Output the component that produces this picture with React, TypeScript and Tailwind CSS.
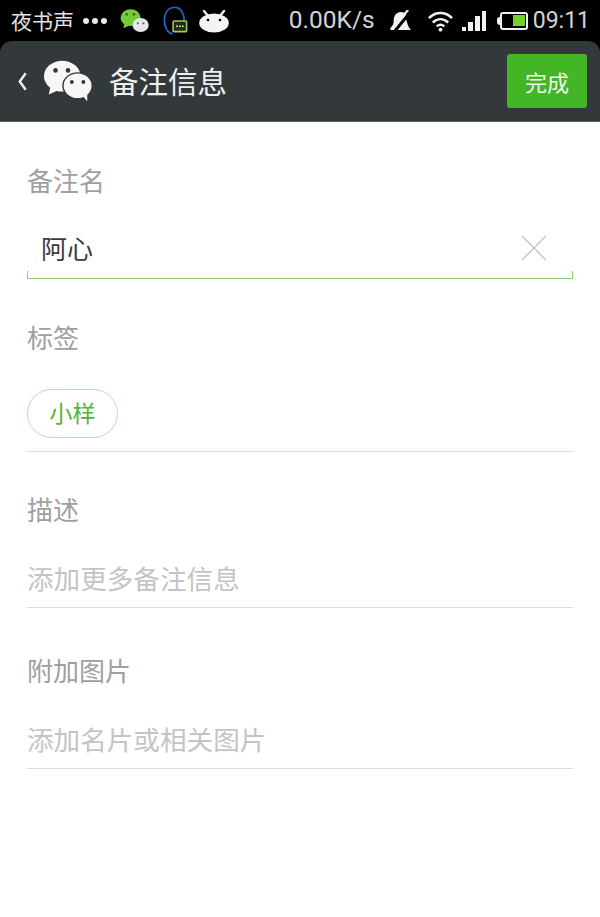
import React from 'react';

const cjk = 'font-["Noto_Sans_CJK_SC",sans-serif]';

function WeChatIcon({ className, back, front, eye }: { className: string; back: string; front: string; eye: string }) {
  return (
    <svg viewBox="0 0 52 44" className={className}>
      <ellipse cx="20" cy="17" rx="19" ry="16" fill={back} />
      <path d="M8 27 L6 36 L17 31 Z" fill={back} />
      <ellipse cx="36" cy="27" rx="16" ry="14" fill={eye} />
      <ellipse cx="36" cy="27" rx="14.5" ry="12.8" fill={front} />
      <path d="M41 37 L46 43 L46 33 Z" fill={front} />
      <circle cx="13" cy="11" r="2.4" fill={eye} />
      <circle cx="26" cy="11" r="2.4" fill={eye} />
      <circle cx="30" cy="23" r="2" fill={eye} />
      <circle cx="42" cy="23" r="2" fill={eye} />
    </svg>
  );
}

function StatusBar() {
  return (
    <div className="flex h-[41px] items-center bg-black pl-[11px] pr-[10px] text-[#e4e4e4]">
      <span className={`text-[21px] leading-none ${cjk}`}>夜书声</span>
      <div className="ml-[9px] flex gap-[3px]">
        <span className="h-[6px] w-[6px] rounded-full bg-[#e8e8e8]" />
        <span className="h-[6px] w-[6px] rounded-full bg-[#e8e8e8]" />
        <span className="h-[6px] w-[6px] rounded-full bg-[#e8e8e8]" />
      </div>
      {/* wechat notification */}
      <svg viewBox="0 0 52 44" className="ml-[13px] h-[25px] w-[29px]">
        <ellipse cx="19" cy="17" rx="18" ry="15" fill="#76c93a" />
        <path d="M8 27 L6 36 L17 31 Z" fill="#76c93a" />
        <ellipse cx="37" cy="30" rx="14.5" ry="12.5" fill="#e6e6e6" />
        <circle cx="12" cy="11" r="2.4" fill="#2f6a12" />
        <circle cx="25" cy="11" r="2.4" fill="#2f6a12" />
        <circle cx="32" cy="27" r="2" fill="#666" />
        <circle cx="42" cy="27" r="2" fill="#666" />
      </svg>
      {/* headset chat icon */}
      <svg viewBox="0 0 28 32" className="ml-[13px] h-[32px] w-[27px]">
        <path d="M5 25 C1 18 1 3 12 2 C20 1 23 9 23 16" fill="none" stroke="#2a62c4" strokeWidth="1.8" />
        <path d="M5 25 C7 28 9 29 11 29" fill="none" stroke="#2a62c4" strokeWidth="1.8" />
        <rect x="11.5" y="16" width="14" height="11" rx="1" fill="#1d2a14" stroke="#a6c85a" strokeWidth="1.6" />
        <circle cx="15.5" cy="21.5" r="1" fill="#d5e59a" />
        <circle cx="18.5" cy="21.5" r="1" fill="#d5e59a" />
        <circle cx="21.5" cy="21.5" r="1" fill="#d5e59a" />
      </svg>
      {/* android cat icon */}
      <svg viewBox="0 0 30 24" className="ml-[10px] h-[24px] w-[30px]">
        <path d="M5 2 L9 7 M25 2 L21 7" stroke="#f0f0f0" strokeWidth="2.4" strokeLinecap="round" />
        <ellipse cx="15" cy="14" rx="14.8" ry="9.6" fill="#f4f4f4" />
        <circle cx="9" cy="11" r="1.3" fill="#000" />
        <circle cx="21" cy="11" r="1.3" fill="#000" />
      </svg>
      <span className="ml-auto font-['Roboto',sans-serif] text-[24.5px] leading-none text-[#d4d4d4]">0.00K/s</span>
      {/* muted bell */}
      <svg viewBox="0 0 24 22" className="ml-[14px] h-[21px] w-[23px]">
        <path d="M1 21 C4 17 5 14 5 10 C5 5 9 2 12 2 C15 2 17 3 18 5 L5 21 Z" fill="#f2f2f2" />
        <path d="M9 21 L18 10 C19 14 20 18 23 21 Z" fill="#f2f2f2" />
        <path d="M2 20 L20 0" stroke="#f2f2f2" strokeWidth="2.4" />
      </svg>
      {/* wifi */}
      <svg viewBox="0 0 28 22" className="ml-[15px] h-[22px] w-[27px]">
        <path d="M2 8 C9 1 19 1 26 8" fill="none" stroke="#f0f0f0" strokeWidth="2.6" />
        <path d="M6 12.5 C11 8 17 8 22 12.5" fill="none" stroke="#f0f0f0" strokeWidth="2.6" />
        <path d="M10 16.5 C12.5 14.5 15.5 14.5 18 16.5" fill="none" stroke="#f0f0f0" strokeWidth="2.4" />
        <circle cx="14" cy="20" r="2" fill="#f0f0f0" />
      </svg>
      {/* signal */}
      <div className="ml-[8px] flex h-[20px] items-end gap-[2px]">
        <span className="h-[4px] w-[4px] bg-[#f0f0f0]" />
        <span className="h-[9px] w-[5px] bg-[#f0f0f0]" />
        <span className="h-[15px] w-[5px] bg-[#f0f0f0]" />
        <span className="h-[20px] w-[4px] bg-[#f0f0f0]" />
      </div>
      {/* battery */}
      <div className="ml-[11px] flex items-center">
        <span className="h-[8px] w-[3px] rounded-l-sm bg-[#f0f0f0]" />
        <div className="flex h-[18px] w-[28px] items-center justify-end rounded-[3px] border-2 border-[#f0f0f0] pr-[1px]">
          <span className="h-[11px] w-[12px] bg-[#74d02c]" />
        </div>
      </div>
      <span className="ml-[5px] font-['Roboto',sans-serif] text-[23px] leading-none text-[#d4d4d4]">09:11</span>
    </div>
  );
}

function Header() {
  return (
    <div className="bg-black">
      <div className="flex h-[81px] items-center rounded-t-[12px] border-b border-[#5c5f60] bg-[#33383b] pl-[17px] pr-[13px]">
        <svg viewBox="0 0 12 22" className="h-[21px] w-[11px]">
          <path d="M9.5 2 L3 11 L9.5 20" fill="none" stroke="#f2f2f2" strokeWidth="2.6" />
        </svg>
        <WeChatIcon className="ml-[15px] h-[44px] w-[50px]" back="#f7f7f7" front="#f7f7f7" eye="#33383b" />
        <span className={`ml-[16px] text-[29.5px] leading-none text-[#efefef] ${cjk}`}>备注信息</span>
        <button className={`ml-auto flex h-[54px] w-[80px] items-center justify-center rounded-[3px] bg-[#43b626] text-[22px] text-[#eef8e8] ${cjk}`}>
          完成
        </button>
      </div>
    </div>
  );
}

function Label({ children }: { children: React.ReactNode }) {
  return <div className={`text-[26px] leading-[38px] text-[#a0a0a0] ${cjk}`}>{children}</div>;
}

function Placeholder({ children }: { children: React.ReactNode }) {
  return (
    <div className={`mt-[31px] border-b border-[#dedede] pb-[10px] text-[26.6px] leading-[38px] text-[#c4c4c4] ${cjk}`}>
      {children}
    </div>
  );
}

export default function App() {
  return (
    <div className="h-[917px] w-[600px] overflow-hidden bg-white">
      <StatusBar />
      <Header />
      <div className="px-[27px] pt-[39px]">
        <Label>备注名</Label>

        {/* name input */}
        <div className="mt-[30px] flex h-[38px] items-center justify-between pl-[14px] pr-[26px]">
          <span className={`text-[26px] leading-none text-[#3c3c3c] ${cjk}`}>阿心</span>
          <svg viewBox="0 0 26 26" className="h-[26px] w-[26px]">
            <path d="M1 1 L25 25 M25 1 L1 25" stroke="#c8c8c8" strokeWidth="1.5" />
          </svg>
        </div>
        <div className="mt-[4px] h-[8px] border-x border-b border-[#8ccf78]" />

        <div className="mt-[39px]">
          <Label>标签</Label>
        </div>
        <div className="mt-[33px] border-b border-[#dedede] pb-[13px]">
          <div className={`flex h-[49px] w-[91px] items-center justify-center rounded-full border border-[#b5e0b8] pb-[2px] text-[23px] text-[#55b33a] ${cjk}`}>
            小样
          </div>
        </div>

        <div className="mt-[38px]">
          <Label>描述</Label>
        </div>
        <Placeholder>添加更多备注信息</Placeholder>

        <div className="mt-[43px]">
          <Label>附加图片</Label>
        </div>
        <Placeholder>添加名片或相关图片</Placeholder>
      </div>
    </div>
  );
}
